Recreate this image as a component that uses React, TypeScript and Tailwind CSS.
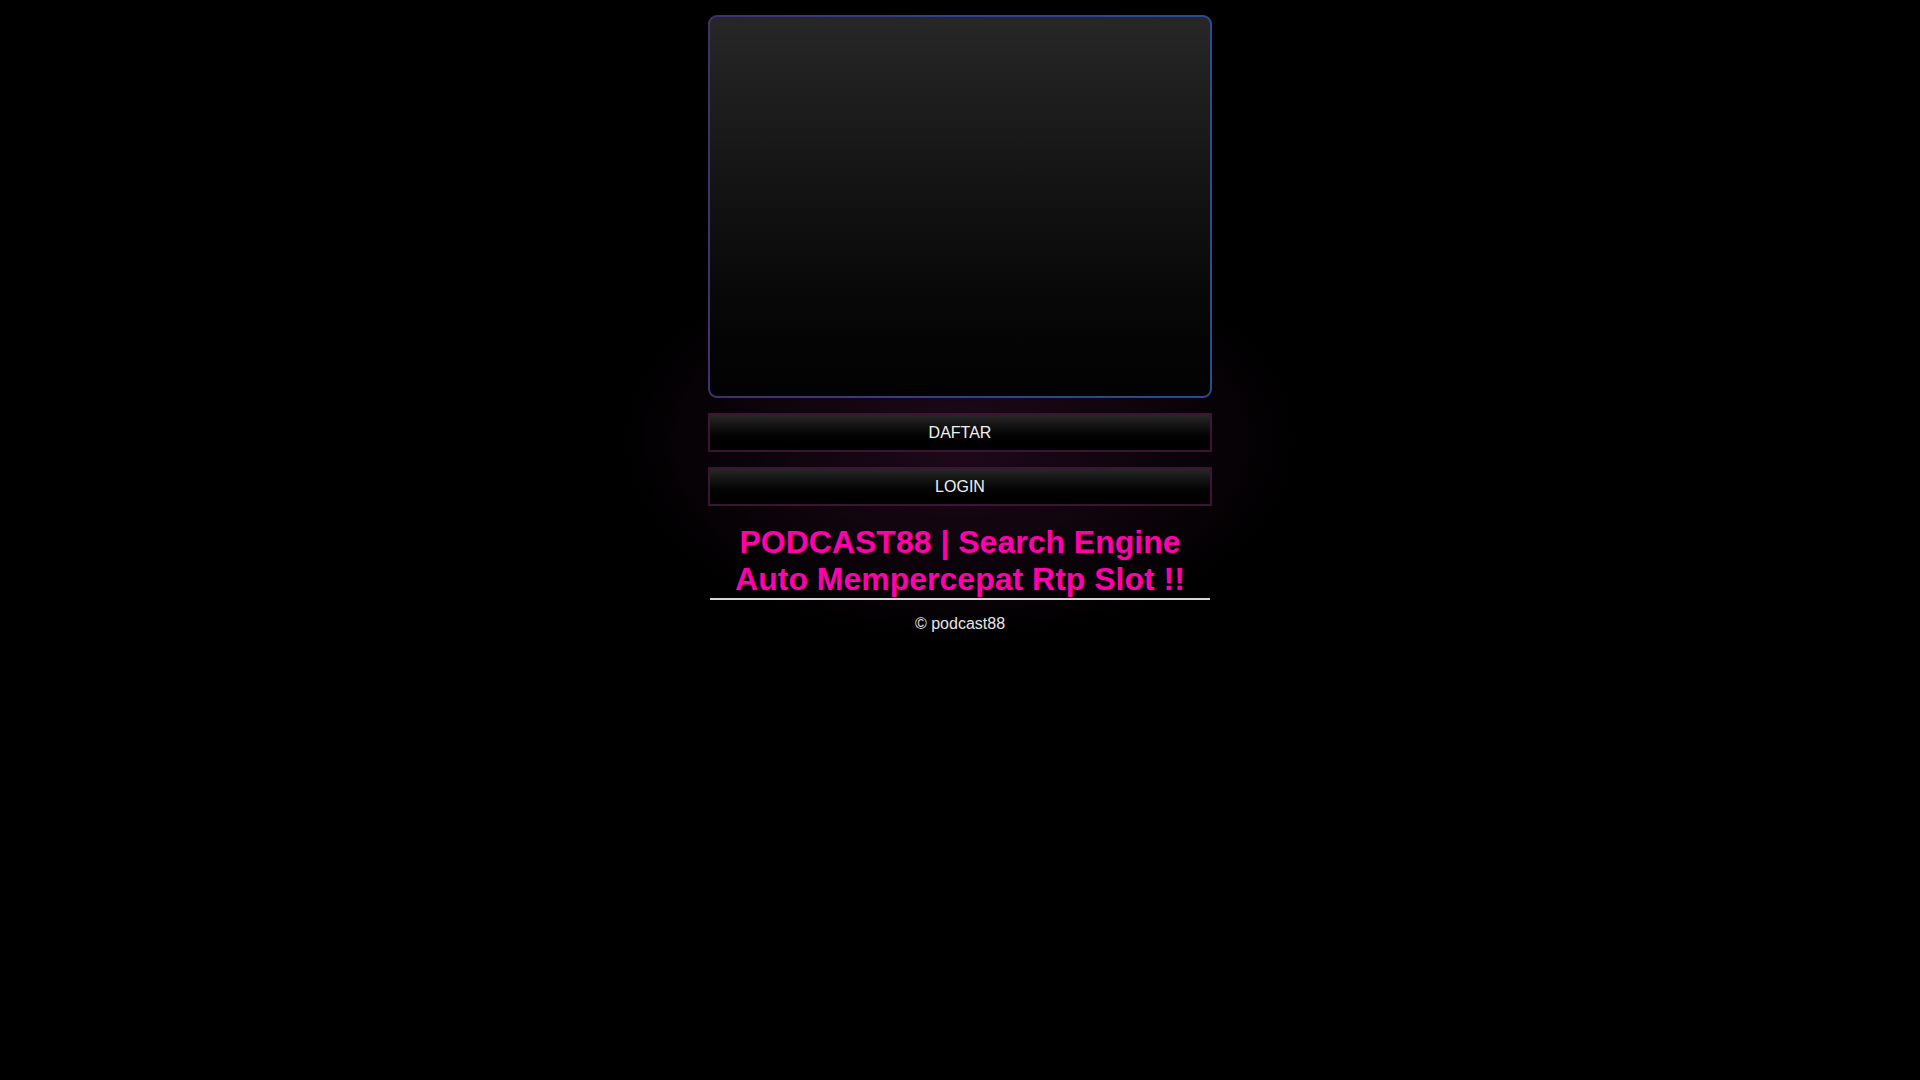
export default function App() {
  return (
    <div
      className="min-h-screen w-full bg-black bg-[radial-gradient(ellipse_340px_200px_at_50%_440px,#1e081b_0%,#12050f_45%,#000_100%)]"
      style={{ fontFamily: '"Liberation Sans", Arial, sans-serif' }}
    >
      <div className="mx-auto flex w-[504px] flex-col pt-[15px]">
        {/* banner frame */}
        <div className="rounded-[9px] bg-gradient-to-r from-[#40306e] via-[#30408a] to-[#2a4a92] p-[2px]">
          <div className="h-[379px] rounded-[7px] bg-gradient-to-b from-[#272727] to-[#020202]" />
        </div>

        <a
          href="#"
          className="mt-[15px] flex h-[39px] items-center justify-center border-2 border-[#3b1534] bg-gradient-to-b from-[#272727] to-[#000] text-base text-[#f0f0f0]"
        >
          DAFTAR
        </a>
        <a
          href="#"
          className="mt-[15px] flex h-[39px] items-center justify-center border-2 border-[#3b1534] bg-gradient-to-b from-[#272727] to-[#000] text-base text-[#f0f0f0]"
        >
          LOGIN
        </a>

        <h1 className="mx-[2px] mt-[18px] border-b-2 border-[#d6d6d6] text-center text-[32px] font-bold leading-[36.8px] text-[#ff00aa]">
          PODCAST88 | Search Engine Auto Mempercepat Rtp Slot !!
        </h1>

        <p className="mt-[12px] text-center text-base text-[#e6e6e6]">© podcast88</p>
      </div>
    </div>
  );
}
